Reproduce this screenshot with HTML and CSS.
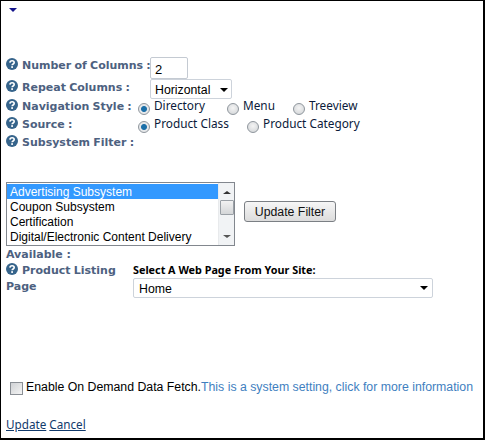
FILE: index.html
```html
<!DOCTYPE html>
<html>
<head>
<meta charset="utf-8">
<title>Product Listing Settings</title>
<link rel="stylesheet" href="styles.css">
</head>
<body>
<svg class="defs" width="0" height="0"><defs>
<symbol id="help" viewBox="0 0 12 12">
<circle cx="6" cy="6" r="6" fill="#36648b"/>
<path d="M3.900 4.600C4 3.300 5 2.700 6.100 2.700c1.300 0 2.100.8 2.100 1.800 0 1.500-2.100 1.400-2.100 2.800" fill="none" stroke="#fff" stroke-width="1.600"/>
<rect x="5.200" y="8.200" width="1.800" height="1.700" fill="#fff"/>
</symbol>
</defs></svg>
<main class="panel">
  <div class="caret"></div>
  <form class="form">
    <div class="row row-columns">
      <label class="label"><svg class="help"><use href="#help"/></svg>Number of Columns :</label>
      <input class="text-input" type="text" value="2">
    </div>
    <div class="row row-repeat">
      <label class="label"><svg class="help"><use href="#help"/></svg>Repeat Columns :</label>
      <div class="select select-small">Horizontal</div>
    </div>
    <div class="row row-nav">
      <label class="label"><svg class="help"><use href="#help"/></svg>Navigation Style :</label>
      <div class="radios">
        <span class="radio-item item-directory"><input class="radio" type="radio" name="nav" checked>Directory</span>
        <span class="radio-item item-menu"><input class="radio" type="radio" name="nav">Menu</span>
        <span class="radio-item"><input class="radio" type="radio" name="nav">Treeview</span>
      </div>
    </div>
    <div class="row row-source">
      <label class="label"><svg class="help"><use href="#help"/></svg>Source :</label>
      <div class="radios">
        <span class="radio-item item-class"><input class="radio" type="radio" name="src" checked>Product Class</span>
        <span class="radio-item"><input class="radio" type="radio" name="src">Product Category</span>
      </div>
    </div>
    <div class="row row-filter">
      <label class="label"><svg class="help"><use href="#help"/></svg>Subsystem Filter :</label>
    </div>
    <div class="filter">
      <div class="listbox">
        <ul class="options">
          <li class="option selected">Advertising Subsystem</li>
          <li class="option">Coupon Subsystem</li>
          <li class="option">Certification</li>
          <li class="option">Digital/Electronic Content Delivery</li>
        </ul>
        <div class="scrollbar">
          <span class="arrow-up"></span>
          <span class="thumb"></span>
          <span class="arrow-down"></span>
        </div>
      </div>
      <button class="button" type="button">Update Filter</button>
    </div>
    <div class="available">Available :</div>
    <div class="listing">
      <label class="label listing-label"><svg class="help"><use href="#help"/></svg>Product Listing Page</label>
      <div class="listing-field">
        <div class="select-title">Select A Web Page From Your Site:</div>
        <div class="select select-wide">Home</div>
      </div>
    </div>
    <div class="fetch">
      <input class="checkbox" type="checkbox">
      <span class="fetch-text">Enable On Demand Data Fetch.</span><a class="info" href="#">This is a system setting, click for more information</a>
    </div>
    <div class="actions"><a href="#">Update</a> <a href="#">Cancel</a></div>
  </form>
</main>
</body>
</html>
```
FILE: styles.css
```css
* { box-sizing: border-box; }
html, body { margin: 0; padding: 0; background: #fff; }
.defs { position: absolute; }
.panel {
  width: 485px;
  height: 440px;
  border: solid #000;
  border-width: 1px 2px 2px 1px;
  padding: 0 0 0 5px;
  overflow: hidden;
  font-family: "Noto Sans", "Open Sans", sans-serif;
  font-size: 11.8px;
  color: #0b1a3a;
}
.caret {
  width: 0;
  height: 0;
  margin: 7px 0 0 3px;
  border: solid transparent;
  border-width: 4px 4px 0;
  border-top-color: #14148c;
}
.form { margin-top: 46px; }
.row { display: flex; align-items: flex-start; }
.label {
  display: block;
  font-family: "DejaVu Sans", sans-serif;
  font-weight: 700;
  font-size: 11px;
  line-height: 16px;
  word-spacing: -0.6px;
  color: #4d6180;
}
.help { width: 12px; height: 12px; margin-right: 4px; vertical-align: -1px; }
.row-columns { height: 21px; gap: 1px; }
.row-columns .label { width: 143px; white-space: nowrap; }
.row-repeat { height: 19px; }
.row-repeat .label { width: 144px; padding-top: 1px; }
.row-nav, .row-source, .row-filter { height: 18px; }
.row-nav .label, .row-source .label { width: 132px; padding-top: 1px; }
.row-filter .label { padding-top: 1px; }
.text-input {
  width: 38px;
  height: 22px;
  margin-top: -1px;
  padding: 3px 0 0 4px;
  border: 1px solid #c4cad2;
  border-radius: 2px;
  font: 13px "Liberation Sans", sans-serif;
  color: #000;
}
.select {
  position: relative;
  height: 19px;
  padding: 1px 0 0 5px;
  border: 1px solid #cdd3db;
  border-radius: 2px;
  font-family: "Liberation Sans", sans-serif;
  font-size: 12.3px;
  line-height: 16px;
  color: #000;
  background: #fff;
}
.select::after {
  content: "";
  position: absolute;
  right: 4px;
  top: 7px;
  border: solid transparent;
  border-width: 4px 4px 0;
  border-top-color: #000;
}
.select-small { width: 82px; height: 20px; padding: 2px 0 0 4px; }
.select-small::after { right: 3px; top: 8px; }
.radios { display: flex; }
.radio-item { display: flex; align-items: flex-start; line-height: 15px; white-space: nowrap; }
.radio {
  appearance: none;
  width: 12px;
  height: 12px;
  margin: 5px 4px 0 0;
  border: 1px solid #8f969d;
  border-radius: 50%;
  background: radial-gradient(circle at 50% 40%, #f4f4f4, #cfd2d5);
}
.radio:checked { background: radial-gradient(circle, #1b6fa8 0 2.500px, #e6e8ea 3.500px); }
.item-directory { width: 89px; }
.item-menu { width: 66px; }
.item-class { width: 109px; }
.filter { display: flex; align-items: flex-start; margin-top: 30px; }
.listbox {
  display: flex;
  width: 229px;
  height: 64px;
  border: 1px solid #82878e;
  background: #fff;
  font-family: "Liberation Sans", sans-serif;
  font-size: 12px;
  color: #000;
}
.options { flex: 1; margin: 0; padding: 1px 0 0; list-style: none; }
.option { height: 15px; padding-left: 3px; line-height: 17px; white-space: nowrap; }
.selected { background: #3399ff; color: #fff; }
.scrollbar {
  position: relative;
  width: 16px;
  background: #f1f3f5;
  border-left: 1px solid #e8eaec;
}
.thumb {
  position: absolute;
  left: 1px;
  top: 17px;
  width: 14px;
  height: 15px;
  border: 1px solid #9aa0a6;
  border-radius: 1px;
  background: linear-gradient(#f2f2f2, #d4d6d8);
}
.arrow-up, .arrow-down {
  position: absolute;
  left: 4px;
  width: 0;
  border: solid transparent;
}
.arrow-up { top: 8px; border-width: 0 4px 3px; border-bottom-color: #333; }
.arrow-down { bottom: 7px; border-width: 3px 4px 0; border-top-color: #555; }
.button {
  width: 92px;
  height: 21px;
  margin: 19px 0 0 9px;
  padding: 0;
  border: 1px solid #7b7f84;
  border-radius: 3px;
  background: linear-gradient(#f6f6f6, #dcdcdc);
  font-family: "Liberation Sans", sans-serif;
  font-size: 12.3px;
  color: #111;
}
.available {
  margin-top: 1px;
  font-family: "DejaVu Sans", sans-serif;
  font-weight: 700;
  font-size: 11px;
  line-height: 16px;
  color: #4d6180;
}
.listing { display: flex; }
.listing-label { width: 127px; }
.listing-field { width: 300px; margin-top: -1px; }
.select-title {
  font-family: "Noto Sans", sans-serif;
  font-weight: 700;
  font-size: 10.8px;
  line-height: 16px;
  color: #000;
}
.select-wide { height: 20px; padding-top: 2px; }
.fetch {
  display: flex;
  align-items: flex-start;
  margin-top: 81px;
  padding-left: 4px;
  height: 20px;
  font-family: "Liberation Sans", sans-serif;
  font-size: 12.3px;
  line-height: 16px;
  color: #000;
  white-space: nowrap;
}
.checkbox {
  appearance: none;
  flex: none;
  width: 13px;
  height: 13px;
  margin: 3px 3px 0 0;
  border: 1px solid #8a8f95;
  background: linear-gradient(135deg, #d0d2d5, #f4f4f4);
}
.info { color: #3f7fbf; text-decoration: none; }
.actions { margin-top: 18px; font-size: 11.7px; line-height: 15px; }
.actions a { color: #123a6b; }
```
